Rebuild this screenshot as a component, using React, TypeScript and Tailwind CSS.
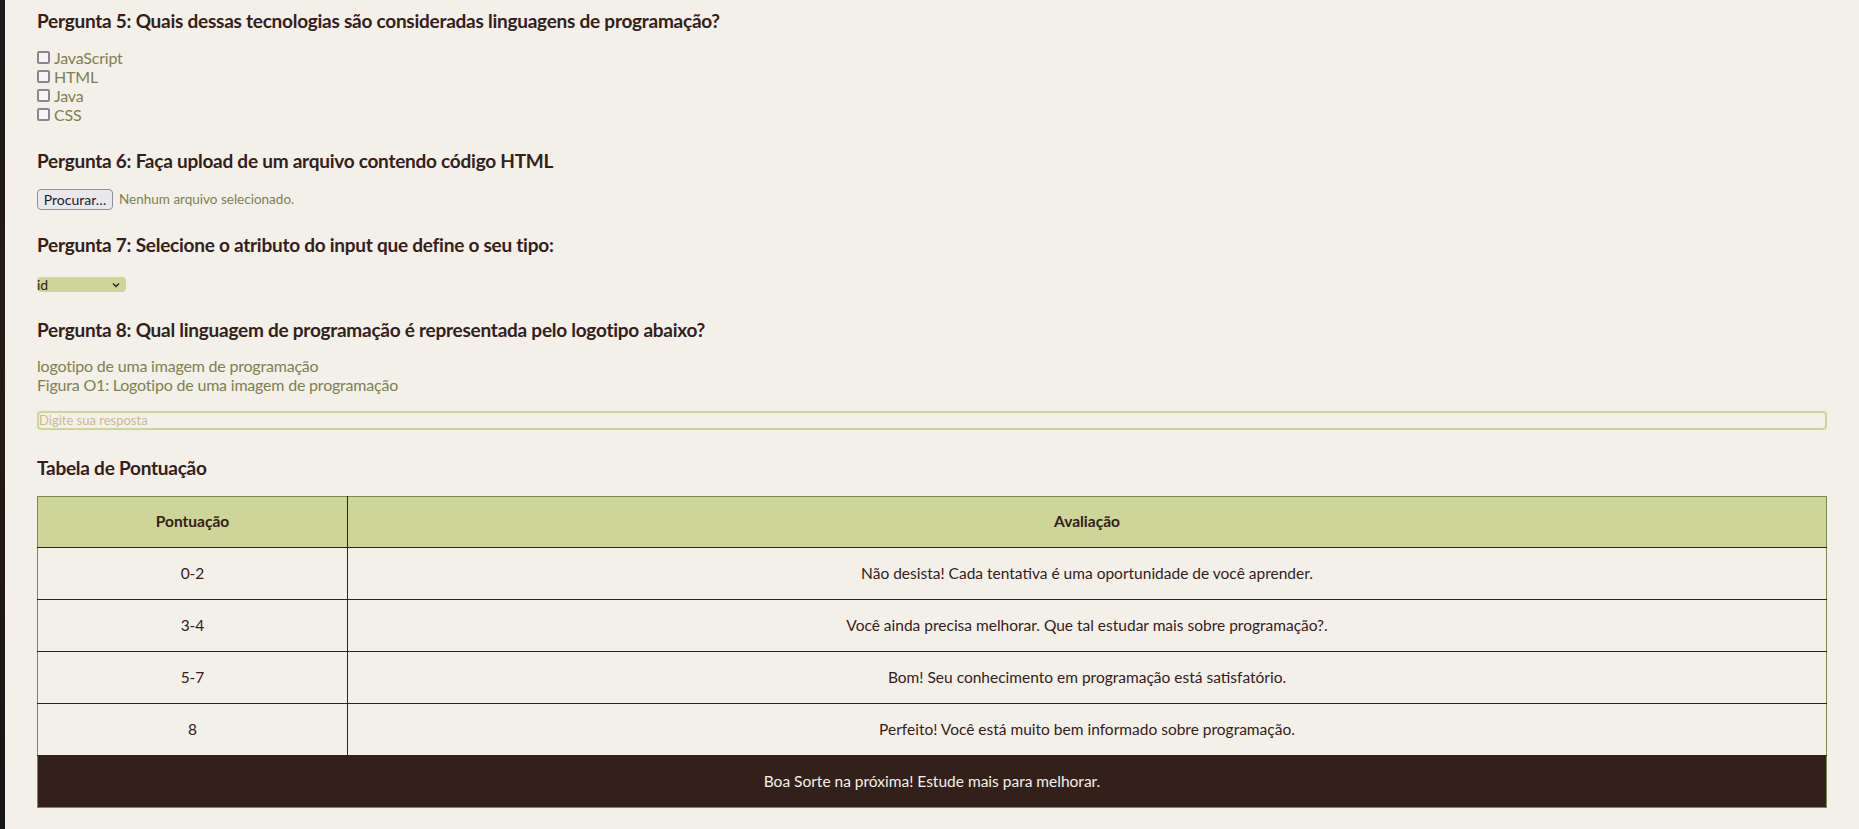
import React from 'react';

const options = ['JavaScript', 'HTML', 'Java', 'CSS'];

const scores = [
  { range: '0-2', text: 'Não desista! Cada tentativa é uma oportunidade de você aprender.' },
  { range: '3-4', text: 'Você ainda precisa melhorar. Que tal estudar mais sobre programação?.' },
  { range: '5-7', text: 'Bom! Seu conhecimento em programação está satisfatório.' },
  { range: '8', text: 'Perfeito! Você está muito bem informado sobre programação.' },
];

function Question({ children, className = '' }: { children: React.ReactNode; className?: string }) {
  return (
    <h2 className={`text-[19px] leading-6 font-bold tracking-[-0.25px] text-[#33201b] ${className}`}>{children}</h2>
  );
}

export default function App() {
  return (
    <div className="flex min-h-[829px] w-full bg-[#f3f0e9] font-['Lato',sans-serif]">
      {/* faixa escura do fundo */}
      <div className="w-[5px] shrink-0 bg-gradient-to-b from-[#1b1a1c] via-[#2a1a14] to-[#141516]" />

      <main className="flex-1 px-8 pt-[9px] pb-6">
        {/* Pergunta 5 */}
        <Question>Pergunta 5: Quais dessas tecnologias são consideradas linguagens de programação?</Question>
        <div className="mt-[15px] flex flex-col">
          {options.map((opt) => (
            <label key={opt} className="flex h-[19px] items-center gap-[4px] text-[16px] tracking-[-0.2px] text-[#7d8050]">
              <span className="block h-[13px] w-[13px] shrink-0 rounded-[2px] border-2 border-[#8a8790] bg-[#f6f5f3]" />
              {opt}
            </label>
          ))}
        </div>

        {/* Pergunta 6 */}
        <Question className="mt-[25px]">Pergunta 6: Faça upload de um arquivo contendo código HTML</Question>
        <div className="mt-[16px] flex h-[21px] items-center gap-[6px]">
          <button className="h-[21px] w-[76px] rounded-[4px] border border-[#8f8f9d] bg-[#e9e9ed] text-[14px] leading-none text-[#1b1b1b] font-['Lato',sans-serif]">
            Procurar…
          </button>
          <span className="text-[13.5px] text-[#7d8050]">Nenhum arquivo selecionado.</span>
        </div>

        {/* Pergunta 7 */}
        <Question className="mt-[23px]">Pergunta 7: Selecione o atributo do input que define o seu tipo:</Question>
        <div className="mt-[20px] flex h-[15px] w-[89px] items-center justify-between rounded-[4px] bg-[#cdd598] pr-[6px] text-[14px] leading-none text-[#33201b]">
          <span>id</span>
          <svg width="8" height="6" viewBox="0 0 8 6" fill="none">
            <path d="M1 1.5 4 4.5 7 1.5" stroke="#33201b" strokeWidth="1.4" />
          </svg>
        </div>

        {/* Pergunta 8 */}
        <Question className="mt-[26px]">Pergunta 8: Qual linguagem de programação é representada pelo logotipo abaixo?</Question>
        <div className="mt-[14px] flex flex-col text-[16px] leading-[19px] tracking-[-0.2px] text-[#7d8050]">
          <span>logotipo de uma imagem de programação</span>
          <span>Figura O1: Logotipo de uma imagem de programação</span>
        </div>
        <input
          placeholder="Digite sua resposta"
          className="mt-[17px] block h-[19px] w-full rounded-[4px] border-2 border-[#cdd598] bg-transparent px-0 text-[13px] text-[#33201b] outline-none placeholder:text-[#cbb995]"
        />

        {/* Tabela */}
        <Question className="mt-[26px]">Tabela de Pontuação</Question>
        <table className="mt-[16px] w-full border-collapse border border-[#7a8b4f] text-[15.5px] text-[#33201b]">
          <thead>
            <tr className="h-[51px] bg-[#cdd598]">
              <th className="w-[310px] border-r border-b border-[#33201b] font-bold">Pontuação</th>
              <th className="border-b border-[#33201b] font-bold">Avaliação</th>
            </tr>
          </thead>
          <tbody>
            {scores.map((s) => (
              <tr key={s.range} className="h-[52px]">
                <td className="border-r border-b border-[#33201b] text-center">{s.range}</td>
                <td className="border-b border-[#33201b] text-center">{s.text}</td>
              </tr>
            ))}
            <tr className="h-[52px] bg-[#33201b]">
              <td colSpan={2} className="text-center text-[#f3f0e9]">
                Boa Sorte na próxima! Estude mais para melhorar.
              </td>
            </tr>
          </tbody>
        </table>
      </main>
    </div>
  );
}
